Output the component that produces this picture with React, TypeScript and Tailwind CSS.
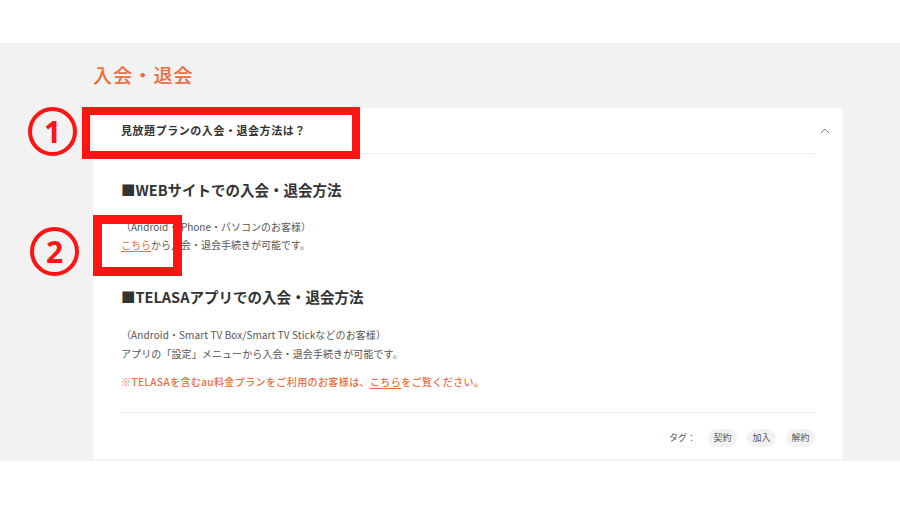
import { ChevronUp } from 'lucide-react';

const jp = { fontFamily: '"Noto Sans CJK JP", "Noto Sans", sans-serif' };

const tags = ['契約', '加入', '解約'];

export default function App() {
  return (
    <div className="relative min-h-screen bg-white text-[#333]" style={jp}>
      <div className="h-[43px]" />

      {/* FAQ section */}
      <section className="bg-[#f2f2f2] pt-[18px]">
        <div className="ml-[93px] w-[750px]">
          <h2 className="text-[19px] leading-[28px] tracking-[0.06em] font-medium text-[#ee6b3d]">
            入会・退会
          </h2>

          <div className="mt-[19px] bg-white shadow-[0_1px_1px_rgba(0,0,0,0.05)]">
            <div className="h-[45px] flex items-center justify-between pl-[28px] pr-[10px]">
              <p className="text-[11px] font-bold tracking-[0.05em] text-[#333]">
                見放題プランの入会・退会方法は？
              </p>
              <ChevronUp className="h-4 w-4 text-[#888]" strokeWidth={1.5} />
            </div>
            <div className="mx-[28px] h-px bg-[#efefef]" />

            <div className="px-[28px]">
              <h3 className="mt-[25px] text-[14.5px] leading-[22px] font-bold text-[#333]">
                ■WEBサイトでの入会・退会方法
              </h3>
              <div className="mt-[17px] text-[10px] leading-[18px] text-[#555]">
                <p>（Android・iPhone・パソコンのお客様）</p>
                <p>
                  <span className="text-[#ee6b3d] underline underline-offset-2">こちら</span>
                  から入会・退会手続きが可能です。
                </p>
              </div>

              <h3 className="mt-[32px] text-[14.5px] leading-[22px] font-bold text-[#333]">
                ■TELASAアプリでの入会・退会方法
              </h3>
              <div className="mt-[17px] text-[10px] leading-[19px] tracking-[0.01em] text-[#555]">
                <p>（Android・Smart TV Box/Smart TV Stickなどのお客様）</p>
                <p>アプリの「設定」メニューから入会・退会手続きが可能です。</p>
              </div>
              <p className="mt-[10px] text-[10px] leading-[18px] tracking-[0.04em] font-medium text-[#ee6b3d]">
                ※TELASAを含むau料金プランをご利用のお客様は、
                <span className="underline underline-offset-2">こちら</span>
                をご覧ください。
              </p>

              <div className="mt-[21px] h-px bg-[#efefef]" />

              <div className="mt-[16px] pb-[12px] flex items-center justify-end gap-[10px]">
                <span className="mr-[2px] text-[9px] text-[#555]">タグ：</span>
                {tags.map((t) => (
                  <span
                    key={t}
                    className="h-[18px] w-[29px] flex items-center justify-center rounded-full bg-[#f2f2f2] text-[9px] text-[#555]"
                  >
                    {t}
                  </span>
                ))}
              </div>
            </div>
          </div>
        </div>
      </section>
      <div className="h-[2px] bg-[#f4f4f4]" />

      {/* Annotations */}
      <div className="absolute left-[28px] top-[107px] h-[49px] w-[49px] rounded-full border-[4px] border-[#ff1414] flex items-center justify-center">
        <span className="text-[30px] leading-none font-bold text-[#ff1414]" style={{ fontFamily: '"Noto Sans", sans-serif' }}>
          1
        </span>
      </div>
      <div className="absolute left-[82px] top-[107px] h-[52px] w-[278px] border-[8px] border-[#ff1414]" />

      <div className="absolute left-[30px] top-[227px] h-[49px] w-[49px] rounded-full border-[4px] border-[#ff1414] flex items-center justify-center">
        <span className="text-[30px] leading-none font-bold text-[#ff1414]" style={{ fontFamily: '"Noto Sans", sans-serif' }}>
          2
        </span>
      </div>
      <div className="absolute left-[93px] top-[215px] h-[61px] w-[89px] border-[9px] border-[#ff1414]" />
    </div>
  );
}
